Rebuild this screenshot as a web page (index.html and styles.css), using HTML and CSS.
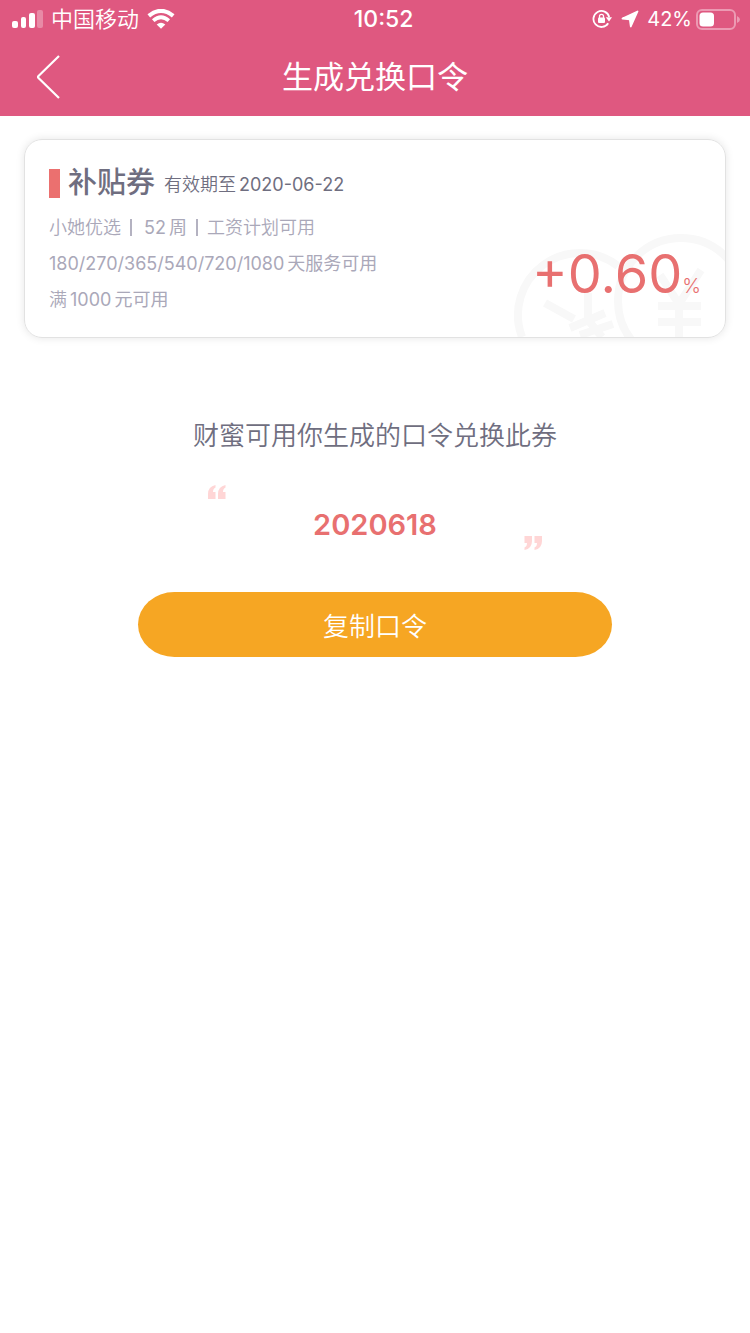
FILE: index.html
```html
<!DOCTYPE html>
<html lang="zh-CN">
<head>
<meta charset="utf-8">
<meta name="viewport" content="width=device-width, initial-scale=1">
<title>生成兑换口令</title>
<link rel="stylesheet" href="styles.css">
</head>
<body>
<header class="header">
  <div class="status">
    <div class="status-side">
      <svg class="signal" viewBox="0 0 31 18" fill="#fff" aria-hidden="true">
        <rect x="0" y="11" width="6" height="7" rx="2"/><rect x="9" y="7" width="5" height="11" rx="2"/><rect x="17" y="3" width="6" height="15" rx="2"/><rect x="25" y="0" width="6" height="18" rx="2" opacity=".3"/>
      </svg>
      <span class="carrier">中国移动</span>
      <svg class="wifi" viewBox="0 0 28 20" aria-hidden="true">
        <path d="M1.800 6.800Q14-3 26.200 6.800" fill="none" stroke="#fff" stroke-width="4.200"/>
        <path d="M6.200 11.600Q14 5 21.800 11.600" fill="none" stroke="#fff" stroke-width="3.800"/>
        <path d="M9.700 15.500Q14 12 18.300 15.500L14 19.800Z" fill="#fff"/>
      </svg>
    </div>
    <time class="clock">10:52</time>
    <div class="status-side">
      <svg class="lock" viewBox="0 0 20 20" aria-hidden="true">
        <path d="M16.200 14.300A8 8 0 1 1 17.200 8" fill="none" stroke="#fff" stroke-width="1.800"/>
        <path d="M13.800 8.300H20L17 12.500Z" fill="#fff"/>
        <rect x="6" y="8.500" width="7" height="5.500" rx="1" fill="#fff"/>
        <path d="M7.500 9V7.300a2 2 0 0 1 4 0V9" fill="none" stroke="#fff" stroke-width="1.300"/>
      </svg>
      <svg class="arrow" viewBox="0 0 18 18" aria-hidden="true"><path d="M1.500 8.500 16.500 1.500 9.800 16.500 8.800 9.300Z" fill="#fff" stroke="#fff" stroke-width="1.800" stroke-linejoin="round"/></svg>
      <span class="charge">42%</span>
      <svg class="battery" viewBox="0 0 44 21" aria-hidden="true">
        <rect x="1" y="1" width="38" height="19" rx="5" fill="none" stroke="#fff" stroke-width="2" opacity=".4"/>
        <rect x="3.500" y="3.500" width="14.500" height="14" rx="3.500" fill="#fff"/>
        <path d="M41 7Q44 8.500 44 10.500T41 14Z" fill="#fff" opacity=".4"/>
      </svg>
    </div>
  </div>
  <nav class="nav">
    <button class="back" type="button" aria-label="返回">
      <svg viewBox="0 0 24 44" aria-hidden="true"><path d="M23 1 2.500 21Q1.500 22 2.500 23L23 43" fill="none" stroke="#fff" stroke-width="2.200"/></svg>
    </button>
    <h1 class="title">生成兑换口令</h1>
  </nav>
</header>
<main class="content">
  <section class="card">
    <svg class="coins" viewBox="0 0 215 107" aria-hidden="true">
      <g fill="none" stroke="#f8f8f8" stroke-width="8">
        <path d="M12 107A62 62 0 0 1 108 36"/>
        <circle cx="171" cy="71" r="63"/>
        <path d="M35 73 64 89M78 63V93M60 98 95 83M70 105 103 94M78 90 92 107"/>
        <path d="M150 45 169 74M191 40 169 74M148 76H191M148 92H191M169 73V107"/>
      </g>
    </svg>
    <div class="coupon">
      <div class="heading">
        <h2 class="name">补贴券</h2>
        <span class="expiry">有效期至<span class="number">2020-06-22</span></span>
      </div>
      <p class="rule">小她优选<span class="divider"></span><span class="number">52</span><span class="number">周</span><span class="divider"></span>工资计划可用</p>
      <p class="rule"><span class="latin">180/270/365/540/720/1080</span><span class="number">天服务可用</span></p>
      <p class="rule">满<span class="number">1000</span><span class="number">元可用</span></p>
    </div>
    <div class="rate"><span class="value">+0.60</span><span class="percent">%</span></div>
  </section>
  <section class="share">
    <p class="hint">财蜜可用你生成的口令兑换此券</p>
    <div class="quote">
      <svg class="mark" viewBox="0 0 18 14" fill="#ffd6d6" aria-hidden="true"><path id="q" d="M7.500 0Q0 1.500 0 9V14H7.500V7H5Q5 3.500 7.500 2.500Z"/><use href="#q" x="10"/></svg>
      <strong class="code">2020618</strong>
      <svg class="mark mark-end" viewBox="0 0 18 14" fill="#ffd6d6" aria-hidden="true"><use href="#q"/><use href="#q" x="10"/></svg>
    </div>
    <button class="copy" type="button">复制口令</button>
  </section>
</main>
</body>
</html>
```

FILE: styles.css
```css
* { box-sizing: border-box; }

body {
  margin: 0;
  background: #fff;
  color: #6f6e80;
  font-family: Inter, "Noto Sans CJK SC", sans-serif;
}

h1, h2, p { margin: 0; }
button { border: 0; padding: 0; font: inherit; cursor: pointer; }
svg { display: block; }

.header { background: #df5880; color: #fff; }

.status {
  display: flex;
  justify-content: space-between;
  align-items: center;
  height: 38px;
  padding: 0 10px 0 12px;
  font-size: 22px;
  line-height: 38px;
}
.status-side { display: flex; align-items: center; }
.signal { width: 31px; height: 18px; }
.carrier { margin: 0 8px; font-weight: 350; }
.wifi { width: 28px; height: 20px; }
.clock { font-size: 23px; font-weight: 500; }
.lock { width: 20px; height: 20px; }
.arrow { width: 18px; height: 18px; margin: 0 8px 0 9px; }
.charge { font-size: 20px; margin-right: 4px; }
.battery { width: 44px; height: 21px; }

.nav {
  display: grid;
  grid-template-columns: 1fr auto 1fr;
  align-items: center;
  height: 78px;
  padding: 0 36px;
}
.back { width: 24px; height: 44px; background: none; }
.back svg { width: 24px; height: 44px; }
.title { font-size: 31px; font-weight: 400; line-height: 44px; }

.content { padding: 23px 24px; }

.card {
  position: relative;
  display: flex;
  justify-content: space-between;
  align-items: flex-end;
  padding: 22px 24px 19px;
  border: 1px solid #e2e2e2;
  border-radius: 18px;
  box-shadow: 0 0 8px rgba(0, 0, 0, 0.1);
  overflow: hidden;
}
.coins { position: absolute; right: 0; bottom: 0; width: 215px; height: 107px; }
.heading { display: flex; align-items: center; gap: 9px; height: 42px; margin-bottom: 6px; }
.name {
  display: flex;
  align-items: center;
  gap: 8px;
  font-size: 29px;
  font-weight: 500;
  line-height: 42px;
}
.name::before { content: ""; width: 11px; height: 29px; background: #eb706f; }
.expiry { font-size: 18px; font-weight: 350; }
.rule { color: #aaa8b9; font-size: 18px; font-weight: 350; line-height: 36px; }
.number { margin-left: 3px; }
.number, .latin { font-weight: 400; }
.divider {
  display: inline-block;
  width: 2px;
  height: 17px;
  margin: 0 9px;
  background: #b4b2c1;
  vertical-align: -2px;
}
.rate { position: relative; display: flex; align-items: baseline; color: #e87070; line-height: 64px; }
.value { font-size: 54px; font-weight: 400; }
.percent { font-size: 20px; font-weight: 300; }

.share { display: flex; flex-direction: column; align-items: center; padding: 78px 114px 0; }
.hint { font-size: 26px; font-weight: 350; line-height: 40px; }
.quote { display: flex; justify-content: space-between; width: 334px; height: 65px; margin-top: 29px; }
.mark { width: 18px; height: 14px; }
.mark-end { align-self: flex-end; transform: rotate(180deg); }
.code { color: #e87070; font-size: 29px; font-weight: 600; line-height: 80px; }
.copy {
  width: 100%;
  height: 65px;
  margin-top: 42px;
  border-radius: 37px / 33px;
  background: #f6a623;
  color: #fff;
  font-size: 26px;
  font-weight: 350;
}
```
